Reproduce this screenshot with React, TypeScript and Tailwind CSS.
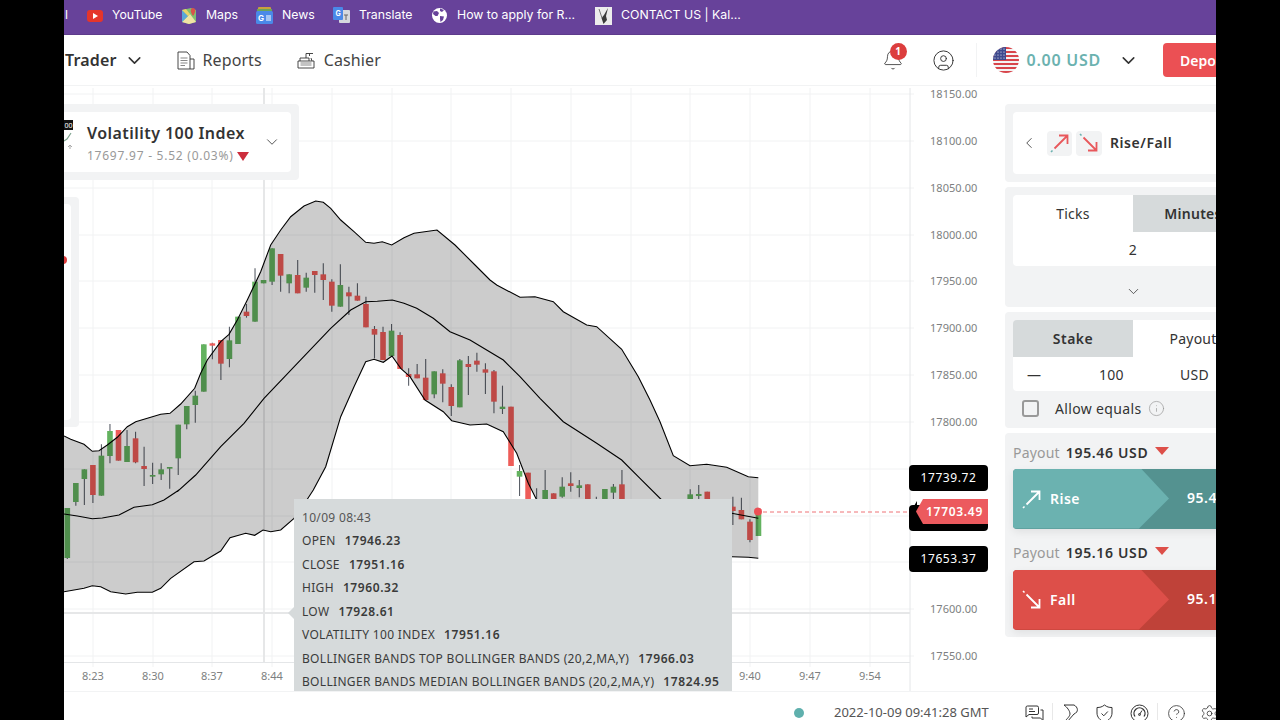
import React from "react";
import { ChevronDown, ChevronLeft, Bell, CircleUser, Info, CircleHelp, Settings } from "lucide-react";

type P = [number, number];
const z4 = (p: P): P => [64 + p[0] / 3, 200 + p[1] / 3];
const z5 = (p: P): P => [360 + p[0] / 3, 280 + p[1] / 3];
const z6 = (p: P): P => [64 + p[0] / 3, 490 + p[1] / 3];

const upper: P[] = [
  ...([[0,708],[20,718],[60,733],[85,754],[105,752],[130,735],[160,712],[190,680],[215,665],[260,652],[290,643],[318,640],[350,612],[392,565],[410,520],[430,480],[470,425],[495,403],[520,360],[550,300],[590,215],[620,135],[650,90],[680,50],[720,18],[755,3],[778,7],[800,25],[830,60],[870,95],[905,127],[930,130],[955,125],[983,135],[1020,113],[1050,100]] as P[]).map(z4),
  [437, 230], [455, 245], [475, 265],
  ...([[390,0],[410,15],[480,52],[525,50],[580,65],[610,95],[680,135],[710,140],[785,208],[835,290],[870,360],[900,425],[940,527],[990,557],[1040,553],[1100,562],[1165,590],[1195,593]] as P[]).map(z5),
];
const median: P[] = [
  ...([[0,72],[40,78],[85,86],[115,84],[165,75],[210,52],[265,44],[300,30],[345,0]] as P[]).map(z6),
  ...([[340,875],[395,825],[470,740],[540,670],[600,595],[700,490],[800,385],[860,330],[905,305],[940,304],[985,300],[1020,310]] as P[]).map(z4),
  ...([[170,85],[220,115],[270,155],[330,180],[430,240],[480,290],[540,355],[610,425],[710,490],[785,540],[840,595],[905,660],[1000,690],[1115,700],[1195,715]] as P[]).map(z5),
];
const lower: P[] = [
  ...([[0,305],[60,295],[85,287],[110,290],[140,305],[185,312],[220,307],[265,307],[290,295],[320,265],[390,215],[420,213],[470,183],[498,143],[545,130],[572,136],[597,120],[620,125],[650,120],[690,85],[730,28],[748,0]] as P[]).map(z6),
  ...([[785,800],[830,650],[870,560],[905,485],[930,478],[958,487],[984,468],[1010,505]] as P[]).map(z4),
  ...([[150,290],[195,360],[250,395],[275,422],[330,435],[380,432],[430,455],[470,520],[505,610],[530,660],[600,760],[800,815],[1115,830],[1165,832],[1195,835]] as P[]).map(z5),
];
const toPath = (pts: P[]) => pts.map((p) => `${p[0].toFixed(1)},${p[1].toFixed(1)}`).join(" ");

// index, green?, bodyTop, bodyBottom, wickTop, wickBottom (crop coordinates)
const c4: [number, number, number, number, number, number][] = [
  [0,1,924,1074,924,1077],[1,1,849,906,849,917],[2,1,808,837,808,915],[3,0,795,885,795,909],[4,1,767,887,733,887],[5,1,693,768,672,790],[6,0,690,782,690,782],[7,1,738,786,690,786],[8,0,715,787,695,790],[9,0,798,807,740,858],[10,1,825,830,788,852],[11,1,808,823,790,840],[12,1,801,806,801,866],[13,1,674,775,674,825],[14,1,618,673,618,688],[15,1,587,615,572,668],[16,1,433,575,433,575],[17,0,430,437,428,478],[18,0,420,491,420,540],[19,1,421,477,380,502],[20,1,350,432,350,432],[21,0,335,348,312,353],[22,1,245,365,205,365],[23,1,240,250,240,250],[24,1,145,245,145,255],[25,0,162,227,162,275],[26,1,223,250,223,280],[27,0,225,280,180,280],[28,1,233,263,218,275],[29,0,213,225,213,278],[30,0,223,240,190,300],[31,0,245,317,238,335],[32,1,255,320,193,320],[33,0,277,289,260,345],[34,0,287,302,250,302],[35,0,312,382,290,382],[36,0,387,404,378,475],[37,0,396,480,380,480],[38,1,392,468,372,468],[39,0,405,507,397,507],
];
const c5: [number, number, number, number, number, number][] = [
  [40,0,282,291,265,317],[41,0,283,295,252,295],[42,0,293,360,237,360],[43,1,274,343,274,355],[44,0,280,311,268,367],[45,0,321,378,313,408],[46,1,241,382,237,382],[47,0,252,261,228,345],[48,0,242,254,218,275],[49,0,268,278,250,342],[50,0,274,365,270,400],[51,1,380,387,317,402],[52,0,380,558,380,558],[53,1,573,590,555,648],[54,0,578,700,578,700],[55,0,700,700,625,700],[56,1,630,700,570,700],[57,0,640,700,640,700],[58,1,620,650,592,653],[59,0,610,618,577,635],[60,1,616,624,600,652],[61,0,613,700,613,700],[62,0,700,700,650,700],[63,1,627,700,627,700],[64,1,620,638,612,700],[65,0,613,700,570,700],[73,1,643,700,628,700],[74,1,642,648,615,700],[75,0,635,700,635,700],[78,0,680,693,650,735],[79,0,690,718,653,718],[80,0,725,780,718,787],[81,1,700,768,700,768],
];
const candles = [
  ...c4.map((c) => ({ i: c[0], g: c[1], t: 200 + c[2] / 3, b: 200 + c[3] / 3, wt: 200 + c[4] / 3, wb: 200 + c[5] / 3 })),
  ...c5.map((c) => ({ i: c[0], g: c[1], t: 280 + c[2] / 3, b: 280 + c[3] / 3, wt: 280 + c[4] / 3, wb: 280 + c[5] / 3 })),
];

const yGrid = [94, 141, 188, 235, 281, 328, 375, 422, 469, 516, 562, 609, 656];
const yLabels: [string, number][] = [["18150.00",94],["18100.00",141],["18050.00",188],["18000.00",235],["17950.00",281],["17900.00",328],["17850.00",375],["17800.00",422],["17600.00",609],["17550.00",656]];
const xGrid = [93, 153, 212, 272, 332, 392, 451, 511, 571, 631, 690, 750, 810, 870];
const xLabels: [string, number][] = [["8:23",93],["8:30",153],["8:37",212],["8:44",272],["9:40",750],["9:47",810],["9:54",870]];

function Chart() {
  return (
    <svg className="absolute inset-0" width={941} height={606} viewBox="64 86 941 606">
      {yGrid.map((y) => <line key={y} x1={64} x2={914} y1={y} y2={y} stroke="#f1f2f3" strokeWidth={1} />)}
      {xGrid.map((x) => <line key={x} x1={x} x2={x} y1={88} y2={667} stroke="#f1f2f3" />)}
      {yLabels.map(([l, y]) => (
        <text key={l} x={930} y={y + 4} fontSize={11} fill="#7d7f81" fontFamily="'Noto Sans',sans-serif" letterSpacing={0.05}>{l}</text>
      ))}
      {xLabels.map(([l, x]) => (
        <text key={l} x={x} y={680} textAnchor="middle" fontSize={11} fill="#7d7f81" fontFamily="'Noto Sans',sans-serif">{l}</text>
      ))}
      <line x1={264} x2={264} y1={88} y2={662} stroke="#e6e7e8" strokeWidth={2} />
      <line x1={64} x2={910} y1={613} y2={613} stroke="#e6e7e8" strokeWidth={2} />
      <line x1={910} x2={910} y1={88} y2={692} stroke="#e4e6e8" strokeWidth={1} />
      <line x1={64} x2={910} y1={662.5} y2={662.5} stroke="#e4e6e8" strokeWidth={1} />
      {candles.map((c, k) => {
        const x = 67.3 + c.i * 8.533;
        return (
          <g key={k}>
            <line x1={x} x2={x} y1={c.wt} y2={c.wb} stroke="#5a5f68" strokeWidth={1.1} />
            {c.b > c.t && <rect x={x - 2.8} y={c.t} width={5.6} height={c.b - c.t} fill={c.g ? "#63b25f" : "#ee5c58"} />}
          </g>
        );
      })}
      <polygon points={toPath([...upper, ...[...lower].reverse()])} fill="#000" fillOpacity={0.2} />
      <polyline points={toPath(upper)} fill="none" stroke="#000" strokeWidth={1.1} />
      <polyline points={toPath(median)} fill="none" stroke="#000" strokeWidth={1.1} />
      <polyline points={toPath(lower)} fill="none" stroke="#000" strokeWidth={1.1} />
      <line x1={763} x2={910} y1={512} y2={512} stroke="#ee7376" strokeWidth={1} strokeDasharray="4 3" />
      <circle cx={758} cy={511.5} r={4} fill="#ec4f55" />
    </svg>
  );
}

function Tooltip() {
  const rows: [string, string][] = [
    ["OPEN", "17946.23"],
    ["CLOSE", "17951.16"],
    ["HIGH", "17960.32"],
    ["LOW", "17928.61"],
    ["VOLATILITY 100 INDEX", "17951.16"],
    ["BOLLINGER BANDS TOP BOLLINGER BANDS (20,2,MA,Y)", "17966.03"],
    ["BOLLINGER BANDS MEDIAN BOLLINGER BANDS (20,2,MA,Y)", "17824.95"],
  ];
  return (
    <div className="absolute left-[230px] top-[413px] w-[438px] h-[193px] bg-[#d6dadb] pl-2 pt-[6.5px] text-[12px] leading-[23.5px] tracking-[0.32px] text-[#3a3a3a]">
      <div className="absolute left-[-6px] top-[108px] w-0 h-0 border-y-[6px] border-y-transparent border-r-[6px] border-r-[#d6dadb]" />
      <div className="text-[#555]">10/09 08:43</div>
      {rows.map(([a, b]) => (
        <div key={a} className="flex gap-[9px] whitespace-nowrap">
          <span>{a}</span>
          <span className="font-semibold tracking-[0.6px]">{b}</span>
        </div>
      ))}
    </div>
  );
}

function Selector() {
  return (
    <div className="absolute left-0 top-[18px] w-[235px] h-[76px] bg-[#f2f3f4] rounded-r pr-2 py-2">
      <div className="h-[60px] bg-white rounded-r flex items-center pl-[23px] pr-[10px] relative">
        <svg className="absolute left-0 top-[7px]" width={9} height={36} viewBox="0 0 9 36">
          <rect x={-4} y={1} width={13} height={10} fill="#111" />
          <text x={0.5} y={9} fontSize={7} fill="#fff" fontFamily="'Noto Sans',sans-serif">00</text>
          <path d="M0 22 L3 20 L7 14" stroke="#7ea48f" strokeWidth={1.2} fill="none" />
          <path d="M6 30 V26 M4 28 L6 26 L8 28" stroke="#aaa" strokeWidth={1} fill="none" />
        </svg>
        <div className="flex-1 flex flex-col pt-[3px]">
          <div className="text-[16px] leading-[22px] font-semibold text-[#333] tracking-[0.45px] whitespace-nowrap">Volatility 100 Index</div>
          <div className="text-[12px] leading-[18px] mt-[3px] text-[#999] flex items-center gap-[3px] whitespace-nowrap tracking-[0.75px]">
            17697.97 - 5.52 (0.03%)
            <span className="w-0 h-0 border-x-[6px] border-x-transparent border-t-[9px] border-t-[#cc2e3d]" />
          </div>
        </div>
        <ChevronDown size={18} strokeWidth={1.1} className="text-[#333]" />
      </div>
    </div>
  );
}

function PriceTags() {
  const tag = "absolute left-[845px] w-[79px] h-[26px] bg-black rounded text-white text-[12px] flex items-center justify-center tracking-[0.6px]";
  return (
    <>
      <div className={`${tag} top-[379px]`}>17739.72</div>
      <div className="absolute left-[845px] top-[419px] w-[79px] h-[26px] bg-black rounded" />
      <div className="absolute left-[847px] top-[415px] w-0 h-0 border-y-[10px] border-y-transparent border-r-[6px] border-r-black" />
      <div className="absolute left-[852px] top-[413px] w-[72px] h-[25px] bg-[#ec5a5e] [clip-path:polygon(0_50%,7px_0,100%_0,100%_100%,7px_100%)] text-white text-[12px] font-semibold flex items-center justify-end pr-[5px] tracking-[0.7px]">17703.49</div>
      <div className={`${tag} top-[460px]`}>17653.37</div>
    </>
  );
}

function ArrowUp({ color, dot }: { color: string; dot: string }) {
  return (
    <svg width={22} height={22} viewBox="0 0 22 22" fill="none">
      <path d="M5.5 16.5 L18 4 M10 3.5 H18.5 V12" stroke={color} strokeWidth={1.8} />
      <path d="M2 20 L3.5 18.5" stroke={dot} strokeWidth={1.6} />
    </svg>
  );
}
function ArrowDown({ color, dot }: { color: string; dot: string }) {
  return (
    <svg width={22} height={22} viewBox="0 0 22 22" fill="none">
      <path d="M5.5 5.5 L18 18 M18.5 10 V18.5 H10" stroke={color} strokeWidth={1.8} />
      <path d="M2 2 L3.5 3.5" stroke={dot} strokeWidth={1.6} />
    </svg>
  );
}

function TradeBtn({ label, pct, up }: { label: string; pct: string; up: boolean }) {
  const bgL = up ? "bg-[#6bb2b0]" : "bg-[#dd4f49]";
  const bgD = up ? "bg-[#549290]" : "bg-[#bf4239]";
  return (
    <div className={`relative h-[60px] w-[240px] shrink-0 rounded ${bgD} shadow-[0_3px_8px_rgba(0,0,0,0.08)] overflow-hidden`}>
      <div className={`absolute inset-y-0 left-0 w-[156px] ${bgL} [clip-path:polygon(0_0,128px_0,156px_50%,126px_100%,0_100%)] flex items-center gap-[7px] pl-[8px]`}>
        {up ? <ArrowUp color="#fff" dot="#fff" /> : <ArrowDown color="#fff" dot="#fff" />}
        <span className="text-white font-semibold text-[14px] tracking-[0.5px] pb-[1px]">{label}</span>
      </div>
      <span className="absolute left-[174px] top-[19px] text-white font-semibold text-[14px] leading-[20px] tracking-[0.5px]">{pct}</span>
    </div>
  );
}

function PayoutRow({ v, cls }: { v: string; cls: string }) {
  return (
    <div className={`${cls} flex items-center gap-[6px] shrink-0`}>
      <span className="text-[#999] tracking-[0.2px]">Payout</span>
      <span className="font-semibold tracking-[0.65px]">{v}</span>
      <span className="ml-[1px] mb-[2px] w-0 h-0 border-x-[7px] border-x-transparent border-t-[8px] border-t-[#dd4f49]" />
    </div>
  );
}

function Side() {
  return (
    <aside className="w-[256px] shrink-0 pt-[18px] flex flex-col gap-[4.5px] text-[#333] text-[14px] tracking-[0.25px]">
      <div className="h-[78px] bg-[#f2f3f4] rounded p-2">
        <div className="h-[62px] bg-white rounded flex items-center pl-[7px]">
          <ChevronLeft size={18} strokeWidth={1.1} className="text-[#333]" />
          <div className="ml-[9px] w-[25px] h-[25px] rounded bg-[#f2f3f4] flex items-center justify-center"><ArrowUp color="#e8585c" dot="#6bb2b0" /></div>
          <div className="ml-[4px] w-[26px] h-[25px] rounded bg-[#f2f3f4] flex items-center justify-center"><ArrowDown color="#e8585c" dot="#6bb2b0" /></div>
          <span className="ml-2 font-semibold tracking-[0.55px] pb-[2px]">Rise/Fall</span>
        </div>
      </div>
      <div className="h-[120.5px] bg-[#f2f3f4] rounded px-2 pt-2 flex flex-col">
        <div className="flex h-[37px]">
          <div className="w-[120px] bg-white flex items-center justify-center rounded-tl">Ticks</div>
          <div className="w-[120px] bg-[#d6dadb] font-semibold flex items-center justify-center">Minutes</div>
        </div>
        <div className="h-[34px] bg-white rounded-b flex items-center justify-center pt-[1px]">2</div>
        <div className="flex-1 flex items-center justify-center pt-[10px]"><ChevronDown size={17} strokeWidth={1.1} /></div>
      </div>
      <div className="h-[116.5px] bg-[#f2f3f4] rounded px-2 pt-2 flex flex-col">
        <div className="flex h-[37px]">
          <div className="w-[120px] bg-[#d6dadb] font-semibold flex items-center justify-center rounded-tl tracking-[0.5px]">Stake</div>
          <div className="w-[120px] bg-white flex items-center justify-center">Payout</div>
        </div>
        <div className="h-[34px] bg-white rounded-b flex items-center relative pt-[1px]">
          <span className="absolute left-[14px]">—</span>
          <span className="absolute left-[86px]">100</span>
          <span className="absolute left-[167px]">USD</span>
        </div>
        <div className="flex items-center mt-[9px] pl-[9px]">
          <span className="w-[17px] h-[17px] rounded-[3px] border-2 border-[#999]" />
          <span className="ml-4 tracking-[0.35px] leading-[18px]">Allow equals</span>
          <Info size={17} strokeWidth={1} className="ml-[6px] text-[#999]" />
        </div>
      </div>
      <div className="h-[204px] bg-[#f2f3f4] rounded px-2 flex flex-col">
        <PayoutRow v="195.46 USD" cls="h-[36px] pt-[3px]" />
        <TradeBtn label="Rise" pct="95.46%" up />
        <PayoutRow v="195.16 USD" cls="h-[41px] pt-[6px]" />
        <TradeBtn label="Fall" pct="95.16%" up={false} />
      </div>
    </aside>
  );
}

function Flag() {
  return (
    <svg width={26} height={26} viewBox="0 0 26 26">
      <defs><clipPath id="fc"><circle cx={13} cy={13} r={13} /></clipPath></defs>
      <g clipPath="url(#fc)">
        <rect width={26} height={26} fill="#f4f4f4" />
        {[0, 4, 8, 12, 16, 20, 24].map((y) => <rect key={y} y={y} width={26} height={2} fill="#d8454b" />)}
        <rect width={13} height={13} fill="#3f4a8e" />
        {[2, 5, 8, 11].map((y) => [2, 5, 8, 11].map((x) => <circle key={`${x}-${y}`} cx={x} cy={y} r={0.6} fill="#fff" />))}
      </g>
    </svg>
  );
}

function Bookmark({ icon, label, gap = "gap-[9px]", w }: { icon: React.ReactNode; label: string; gap?: string; w: string }) {
  return (
    <div className={`flex items-center ${gap} ${w} shrink-0 whitespace-nowrap`}>
      {icon}
      <span>{label}</span>
    </div>
  );
}

export default function App() {
  return (
    <div className="w-[1280px] h-[720px] bg-black flex justify-center overflow-hidden font-['Noto_Sans',sans-serif]">
      <div className="w-[1152px] h-[720px] bg-white flex flex-col overflow-hidden">
        <div className="h-[35px] shrink-0 bg-[#67429a] border-b border-[#5d3b8b] pb-[3px] flex items-center text-white text-[12.3px] font-['Inter',sans-serif]">
          <span className="w-[23px] shrink-0 pl-[1px]">l</span>
          <Bookmark w="w-[94px]" label="YouTube" icon={
            <svg width={16} height={12} viewBox="0 0 16 12"><rect width={16} height={12} rx={3} fill="#e5352b" /><path d="M6 3 L11 6 L6 9 Z" fill="#fff" /></svg>} />
          <Bookmark w="w-[75px]" label="Maps" icon={
            <svg width={16} height={17} viewBox="0 0 16 17"><path d="M1 3 L10 1 L15 3 V15 L8 17 L1 15 Z" fill="#7fbf72" /><path d="M1 15 L9 7 L15 15 L8 17 Z" fill="#f1e3a4" /><path d="M1 3 L7 9 L1 15 Z" fill="#5aa7d8" /><path d="M1 3 L5 2 L9 7 L7 9 Z" fill="#e9d36c" /><path d="M12 9 C9 5 9 1 12 1 C15 1 15 5 12 9 Z" fill="#d9534a" /></svg>} />
          <Bookmark w="w-[77px]" label="News" icon={
            <svg width={17} height={17} viewBox="0 0 17 17"><rect x={2} y={0} width={13} height={3} rx={1} fill="#c9a13c" /><rect x={1} y={2} width={15} height={3} fill="#6aa35c" /><rect x={0} y={4} width={17} height={13} rx={1.5} fill="#4a89e8" /><text x={2} y={14} fontSize={8} fontWeight={700} fill="#fff">G</text><path d="M10 9 H15 M10 11 H15 M10 13 H15" stroke="#fff" strokeWidth={1} /></svg>} />
          <Bookmark w="w-[99px]" label="Translate" icon={
            <svg width={17} height={17} viewBox="0 0 17 17"><rect x={6} y={3} width={11} height={13} rx={1} fill="#d5d8de" /><rect x={0} y={0} width={10} height={13} rx={1} fill="#4a89e8" /><text x={2.5} y={9} fontSize={7} fontWeight={700} fill="#fff">G</text><path d="M11 8 H15 M13 8 V13" stroke="#666" strokeWidth={1} /></svg>} />
          <Bookmark w="w-[163px]" label="How to apply for R..." gap="gap-[10px]" icon={
            <svg width={15} height={15} viewBox="0 0 15 15"><circle cx={7.5} cy={7.5} r={7.5} fill="#fff" /><path d="M1.5 3.5 L5 3 L7 5 L5.5 8 L3.5 8 L1 6 Z M8 8 L12 8.5 L11 12 L8.5 14 L8 11 Z M8 0.5 L12 2 L10 4 L8 3 Z" fill="#67429a" /></svg>} />
          <Bookmark w="w-[200px]" label="CONTACT US | Kal..." icon={
            <svg width={17} height={18} viewBox="0 0 17 18"><rect width={17} height={18} fill="#ececec" /><path d="M8.5 17 L6.5 11 L9 8 L13 1 L11 9 L12 13 Z" fill="#3a3a3a" /><path d="M4 2 L7 11" stroke="#777" strokeWidth={1} /></svg>} />
        </div>

        <div className="h-[51px] shrink-0 border-b border-[#f2f3f4] flex items-center text-[16px] text-[#333]">
          <span className="ml-px font-semibold tracking-[0.15px]">Trader</span>
          <ChevronDown size={21} strokeWidth={1.8} className="ml-[7px]" />
          <svg className="ml-[32px]" width={18} height={19} viewBox="0 0 18 19" fill="none" stroke="#333" strokeWidth={0.9}>
            <path d="M1 1 H10 L13 4.5 V18 H1 Z M13 8 H17 V18 H13" />
            <path d="M3.5 7 H10.5 M3.5 9.5 H10.5 M3.5 12 H10.5 M3.5 14.5 H8" stroke="#888" strokeWidth={1.2} />
          </svg>
          <span className="ml-[8px] tracking-[0.1px] text-[#444]">Reports</span>
          <svg className="ml-[35px]" width={18} height={17} viewBox="0 0 18 17" fill="none" stroke="#333" strokeWidth={0.9}>
            <path d="M1 9 H17 V16 H1 Z M3 9 V6 H12 V9 M9 6 V1.5 H16 M12.5 1.5 V4 M14 6 L15 9" />
            <path d="M3.5 11 H14.5 M3.5 13 H14.5" stroke="#888" strokeWidth={1.2} />
          </svg>
          <span className="ml-[9px] tracking-[0.1px] text-[#444]">Cashier</span>
          <div className="flex-1" />
          <div className="relative w-[24px] h-[24px] flex items-center justify-center">
            <Bell size={22} strokeWidth={0.9} className="text-[#333]" />
            <span className="absolute left-[9px] top-[-5px] w-[17px] h-[17px] rounded-full bg-[#dc3d3d] text-white text-[10px] font-bold flex items-center justify-center">1</span>
          </div>
          <CircleUser size={23} strokeWidth={1} className="ml-[27px] text-[#333]" />
          <div className="ml-[21px] w-px h-[34px] bg-[#f2f3f4]" />
          <div className="ml-[16px]"><Flag /></div>
          <span className="ml-[8px] font-semibold text-[#6bb2b0] whitespace-nowrap tracking-[0.75px]">0.00 USD</span>
          <ChevronDown size={21} strokeWidth={1.8} className="ml-[17px]" />
          <div className="ml-[24px] w-[70px] h-[34px] rounded bg-[#eb5054] text-white font-semibold text-[14px] flex items-center pl-[17px] mr-[-17px] shrink-0">Deposit</div>
        </div>

        <div className="h-[606px] shrink-0 flex border-b border-[#f2f3f4]">
          <div className="relative w-[941px] shrink-0 overflow-hidden">
            <Chart />
            <div className="absolute left-0 top-[111px] w-[15px] h-[230px] bg-[#f2f3f4] rounded-r pr-2 py-[7px]">
              <div className="h-full bg-white rounded-r" />
            </div>
            <div className="absolute left-[-5px] top-[170px] w-2 h-2 rounded-full bg-[#dc3d3d]" />
            <Selector />
            <Tooltip />
            <PriceTags />
          </div>
          <Side />
        </div>

        <div className="flex-1 flex items-center pt-[11px] text-[#555]">
          <span className="ml-[730px] w-[10px] h-[10px] rounded-full bg-[#5fb0ad] shrink-0" />
          <span className="ml-[30px] text-[13px] whitespace-nowrap shrink-0">2022-10-09 09:41:28 GMT</span>
          <svg className="ml-[36px] shrink-0" width={19} height={17} viewBox="0 0 19 17" fill="none" stroke="#333" strokeWidth={1}>
            <path d="M1 2 A1.5 1.5 0 0 1 2.5 1 H12 A1.5 1.5 0 0 1 13.5 2.5 V8 A1.5 1.5 0 0 1 12 9.5 H4 L1 12 Z M15.5 5 H18 V15.5 L15.5 13 H7 V11.5 M4 4 H8 M4 6.5 H10" />
          </svg>
          <div className="ml-[8px] w-px h-[20px] bg-[#e8e8e8] shrink-0" />
          <svg className="ml-[9px] shrink-0" width={18} height={19} viewBox="0 0 18 19" fill="none" stroke="#333" strokeWidth={1}>
            <path d="M2 1 H12 C16 3 17 8 12 10 L5 18 H2 C5 15 8 12 8 10 C8 7 5 3 2 1 Z" />
          </svg>
          <svg className="ml-[15px] shrink-0" width={19} height={19} viewBox="0 0 19 19" fill="none" stroke="#333" strokeWidth={1}>
            <path d="M9.5 1 C12 3 14 3.5 17 3.5 V9 C17 13 14 16.5 9.5 18 C5 16.5 2 13 2 9 V3.5 C5 3.5 7 3 9.5 1 Z" />
            <path d="M6.5 9.5 L8.8 11.8 L12.8 7.5" />
          </svg>
          <svg className="ml-[16px] shrink-0" width={19} height={19} viewBox="0 0 19 19" fill="none" stroke="#333" strokeWidth={1}>
            <circle cx={9.5} cy={9.5} r={8.5} />
            <path d="M5 12.5 A5.5 5.5 0 1 1 14 12.5" strokeWidth={1.3} />
            <path d="M9.5 10.5 L12 6.5" />
            <circle cx={9.5} cy={10.5} r={1} />
          </svg>
          <div className="ml-[8px] w-px h-[20px] bg-[#e8e8e8] shrink-0" />
          <CircleHelp size={19} strokeWidth={1} className="ml-[9px] text-[#333] shrink-0" />
          <Settings size={19} strokeWidth={1} className="ml-[14px] text-[#333] shrink-0" />
        </div>
      </div>
    </div>
  );
}
